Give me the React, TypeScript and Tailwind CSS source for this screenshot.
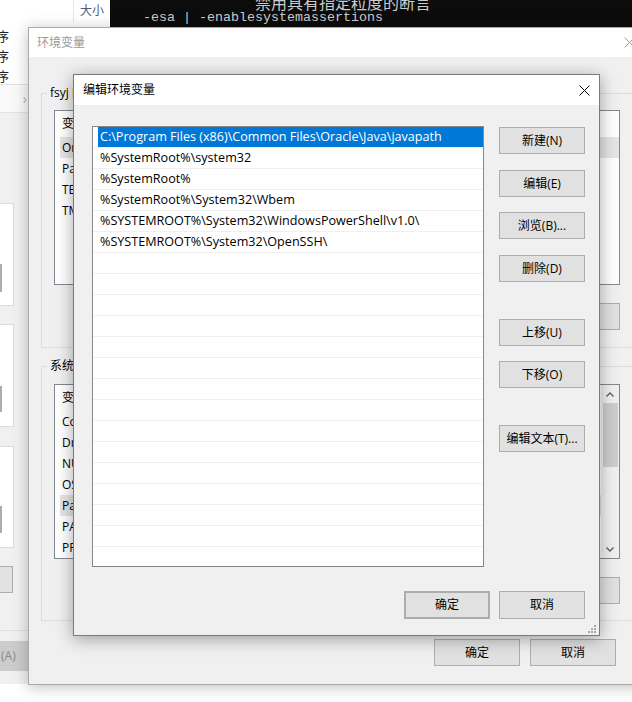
import React from "react";

const paths = [
  "C:\\Program Files (x86)\\Common Files\\Oracle\\Java\\javapath",
  "%SystemRoot%\\system32",
  "%SystemRoot%",
  "%SystemRoot%\\System32\\Wbem",
  "%SYSTEMROOT%\\System32\\WindowsPowerShell\\v1.0\\",
  "%SYSTEMROOT%\\System32\\OpenSSH\\",
];

const sideButtons = [
  { label: "新建(N)", space: "" },
  { label: "编辑(E)", space: "mt-[16px]" },
  { label: "浏览(B)...", space: "mt-[15px]" },
  { label: "删除(D)", space: "mt-[16px]" },
  { label: "上移(U)", space: "mt-[37px]" },
  { label: "下移(O)", space: "mt-[15px]" },
  { label: "编辑文本(T)...", space: "mt-[37px]" },
];

const userVars = ["OneDrive", "Path", "TEMP", "TMP"];
const sysVars = ["ComSpec", "DriverData", "NUMBER_OF_PROCESSORS", "OS", "Path", "PATHEXT", "PROCESSOR_ARCHITECTURE"];

function CloseX({ color = "#000000" }: { color?: string }) {
  return (
    <svg width="11" height="11" viewBox="0 0 11 11">
      <path d="M0.5 0.5 L10.5 10.5 M10.5 0.5 L0.5 10.5" stroke={color} strokeWidth="1" fill="none" />
    </svg>
  );
}

function Btn({ label, className = "" }: { label: string; className?: string }) {
  return (
    <div className={`flex items-center justify-center w-[86px] h-[27px] bg-[#e1e1e1] border border-[#adadad] text-[12px] text-black ${className}`}>
      {label}
    </div>
  );
}

function Chevron({ down = false }: { down?: boolean }) {
  return (
    <svg width="8" height="5" viewBox="0 0 8 5">
      <path d={down ? "M0.5 0.5 L4 4 L7.5 0.5" : "M0.5 4.5 L4 1 L7.5 4.5"} stroke="#606060" strokeWidth="1.4" fill="none" />
    </svg>
  );
}

function VarList({ items, selected, scroll = false }: { items: string[]; selected: number; scroll?: boolean }) {
  return (
    <div className="flex w-[566px] h-[175px] bg-white border border-[#828790] overflow-hidden">
      <div className="flex-1 pl-[5px] text-[12px] text-black">
        <div className="h-[26px] flex items-center pl-[2px] gap-[140px]">
          <span>变量</span>
          <span>值</span>
        </div>
        {items.map((v, i) => (
          <div key={i} className={`h-[21px] flex items-center pl-[2px] ${i === selected ? "bg-[#e5e5e5]" : ""}`}>
            {v}
          </div>
        ))}
      </div>
      {scroll && (
        <div className="w-[18px] h-full bg-[#f0f0f0] flex flex-col items-center">
          <div className="h-[18px] flex items-center justify-center"><Chevron /></div>
          <div className="w-[15px] h-[64px] bg-[#cdcdcd]" />
          <div className="flex-1" />
          <div className="h-[18px] flex items-center justify-center"><Chevron down /></div>
        </div>
      )}
    </div>
  );
}

export default function App() {
  return (
    <div className="relative w-[632px] h-[702px] overflow-hidden bg-white font-['Open_Sans','Noto_Sans_CJK_SC',sans-serif] text-black">
      {/* explorer window behind */}
      <div className="absolute left-0 top-0 w-[120px] h-[84px] bg-white">
        <div className="h-[27px] flex">
          <div className="w-[73px]" />
          <div className="flex-1 border-l border-[#e5e5e5] h-[22px] pl-[6px] pt-[2px] text-[12px] text-[#4c607a] bg-white">大小</div>
        </div>
        {[0, 1, 2].map((i) => (
          <div key={i} className="w-[9px] h-[20px] overflow-hidden flex justify-end items-center text-[13px] text-[#222]">
            <span className="whitespace-nowrap">应用程序</span>
          </div>
        ))}
      </div>

      {/* console */}
      <div className="absolute left-[110px] top-0 w-[522px] h-[27px] bg-[#0c0c0c] overflow-hidden text-[#cccccc]">
        <div className="mt-[-6px] h-[16px] pl-[145px] text-[16px] leading-[16px] font-['Noto_Sans_CJK_SC',monospace] whitespace-nowrap">
          禁用具有指定粒度的断言
        </div>
        <div className="h-[16px] pl-[33px] text-[13.33px] leading-[16px] font-['Liberation_Mono',monospace] whitespace-pre">
          -esa | -enablesystemassertions
        </div>
      </div>

      {/* system properties window strip */}
      <div className="absolute left-0 top-[84px] w-[40px] h-[600px] bg-[#f0f0f0] flex flex-col">
        <div className="h-[29px] bg-[#f9f9f9] border-y border-[#e3e3e3] flex items-center justify-end pr-[13px] text-[14px] text-[#b0b0b0]">›</div>
        <div className="mt-[90px] w-[14px] h-[103px] bg-white border-y border-r border-[#dcdcdc] pt-[60px]">
          <div className="w-[2px] h-[28px] bg-[#adadad]" />
        </div>
        <div className="mt-[18px] w-[14px] h-[103px] bg-white border-y border-r border-[#dcdcdc] pt-[61px]">
          <div className="w-[2px] h-[26px] bg-[#adadad]" />
        </div>
        <div className="mt-[19px] w-[14px] h-[102px] bg-white border-y border-r border-[#dcdcdc] pt-[59px]">
          <div className="w-[2px] h-[27px] bg-[#adadad]" />
        </div>
        <div className="mt-[18px] w-[13px] h-[27px] bg-[#e1e1e1] border-y border-r border-[#adadad]" />
        <div className="mt-[37px] border-t border-[#dfdfdf] pt-[10px]">
          <div className="h-[30px] bg-[#cccccc] flex items-center text-[12px] text-[#8a8a8a] pl-[1px] whitespace-nowrap overflow-hidden">
            (A)
          </div>
        </div>
      </div>

      {/* 环境变量 window */}
      <div className="absolute left-[28px] top-[27px] w-[624px] h-[658px] bg-[#f0f0f0] border border-[#aaaaaa] shadow-[0_2px_14px_rgba(0,0,0,0.25)] flex flex-col">
        <div className="h-[29px] bg-white flex items-center justify-between shrink-0">
          <span className="pl-[8px] text-[12px] text-[#999999]">环境变量</span>
          <div className="w-[44px] flex justify-center"><CloseX color="#9a9a9a" /></div>
        </div>
        <div className="flex flex-col pl-[12px] pt-[28px]">
          <fieldset className="w-[595px] border border-[#dcdcdc] pl-[12px] pr-[16px] pb-[17px]">
            <legend className="ml-[-7px] px-[3px] text-[12px] leading-[16px]">fsyj 的用户变量(U)</legend>
            <div className="mt-[9px]">
              <VarList items={userVars} selected={0} />
            </div>
            <div className="mt-[18px] flex justify-end gap-[9px]">
              <Btn label="新建(N)..." className="h-[26px]" />
              <Btn label="编辑(E)..." className="h-[26px]" />
              <Btn label="删除(D)" className="h-[26px]" />
            </div>
          </fieldset>
          <fieldset className="mt-[10px] w-[595px] border border-[#dcdcdc] pl-[12px] pr-[16px] pb-[16px]">
            <legend className="ml-[-7px] px-[3px] text-[12px] leading-[16px]">系统变量(S)</legend>
            <div className="mt-[10px]">
              <VarList items={sysVars} selected={4} scroll />
            </div>
            <div className="mt-[18px] flex justify-end gap-[9px]">
              <Btn label="新建(W)..." />
              <Btn label="编辑(I)..." />
              <Btn label="删除(L)" />
            </div>
          </fieldset>
          <div className="mt-[18px] flex justify-end gap-[10px] pr-[35px]">
            <Btn label="确定" />
            <Btn label="取消" />
          </div>
        </div>
      </div>

      {/* 编辑环境变量 dialog */}
      <div className="absolute left-[73px] top-[74px] w-[527px] h-[562px] bg-[#f0f0f0] border border-[#7a7a7a] shadow-[0_3px_16px_rgba(0,0,0,0.35)] flex flex-col">
        <div className="h-[30px] bg-white flex items-center justify-between shrink-0">
          <span className="pl-[9px] text-[12px]">编辑环境变量</span>
          <div className="w-[30px] flex justify-center"><CloseX /></div>
        </div>
        <div className="flex pl-[18px] pt-[21px]">
          <div className="w-[392px] h-[441px] bg-white border border-[#828790] overflow-hidden text-[12.6px]">
            {Array.from({ length: 21 }).map((_, i) => (
              <div key={i} className="h-[21px] border-b border-[#f0f0f0]">
                <div className={`ml-[5px] h-full flex items-center pl-[2px] whitespace-nowrap ${i === 0 ? "bg-[#0078d7] text-white" : ""}`}>
                  {paths[i] ?? ""}
                </div>
              </div>
            ))}
          </div>
          <div className="ml-[15px] pt-[1px] flex flex-col">
            {sideButtons.map((b) => (
              <Btn key={b.label} label={b.label} className={b.space} />
            ))}
          </div>
        </div>
        <div className="mt-[24px] flex justify-end gap-[9px] pr-[14px]">
          <Btn label="确定" className="h-[28px] border-2 border-[#0078d7]" />
          <Btn label="取消" className="h-[28px]" />
        </div>
        <svg className="absolute right-[3px] bottom-[2px]" width="8" height="8" viewBox="0 0 8 8">
          <rect x="6" y="0" width="2" height="2" fill="#a8a8a8" />
          <rect x="3" y="3" width="2" height="2" fill="#a8a8a8" />
          <rect x="6" y="3" width="2" height="2" fill="#a8a8a8" />
          <rect x="0" y="6" width="2" height="2" fill="#a8a8a8" />
          <rect x="3" y="6" width="2" height="2" fill="#a8a8a8" />
          <rect x="6" y="6" width="2" height="2" fill="#a8a8a8" />
        </svg>
      </div>
    </div>
  );
}
